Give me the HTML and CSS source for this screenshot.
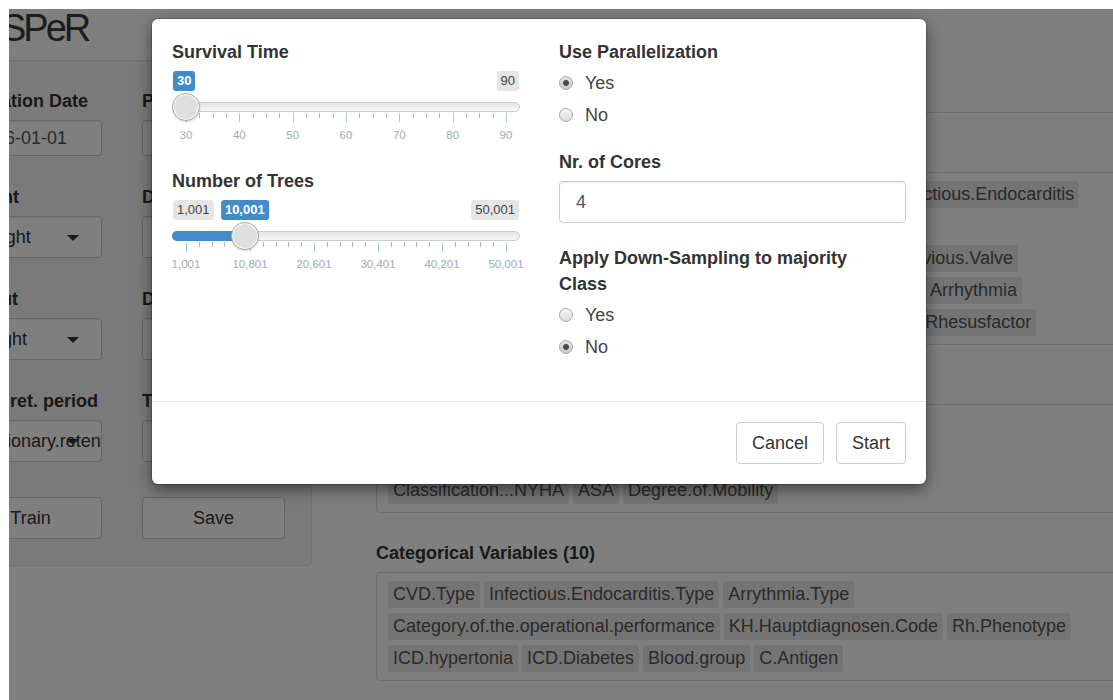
FILE: index.html
```html
<!DOCTYPE html>
<html lang="en">
<head>
<meta charset="utf-8">
<title>SPeR</title>
<link rel="stylesheet" href="styles.css">
</head>
<body>
<div class="doc-line"><p>Example of the modal dialog with the settings of the learning algorithm and the prediction type</p></div>

<div class="frame">
  <div class="app">
    <h1 class="app-title">SPeR</h1>

    <div class="layout">
      <aside class="well">
        <div class="well-grid">
          <div class="form-group">
            <label>Operation Date</label>
            <div class="form-control date">2016-01-01</div>
          </div>
          <div class="form-group">
            <label>Prediction Date</label>
            <div class="form-control date">2017-12-31</div>
          </div>

          <div class="form-group">
            <label>Patient</label>
            <div class="form-control select">Weight<span class="caret"></span></div>
          </div>
          <div class="form-group">
            <label>Data Source</label>
            <div class="form-control select">Registry<span class="caret"></span></div>
          </div>

          <div class="form-group">
            <label>Output</label>
            <div class="form-control select">Height<span class="caret"></span></div>
          </div>
          <div class="form-group">
            <label>Data Split</label>
            <div class="form-control select">Random<span class="caret"></span></div>
          </div>

          <div class="form-group">
            <label>Mean ret. period</label>
            <div class="form-control select">Stationary.retention<span class="caret"></span></div>
          </div>
          <div class="form-group">
            <label>Time Unit</label>
            <div class="form-control select">Days<span class="caret"></span></div>
          </div>

          <button class="btn btn-block" type="button">Train</button>
          <button class="btn btn-block" type="button">Save</button>
        </div>
      </aside>

      <main class="main">
        <nav class="tabs">
          <a class="tab active">Variables</a>
          <a class="tab">Results</a>
        </nav>

        <section class="var-group">
          <label>Binary Variables (24)</label>
          <div class="tag-box">
            <div class="tag-row"><span class="tag">Sex</span><span class="tag">Diabetes.mellitus</span><span class="tag">Hypertension</span><span class="tag">Heart.Failure</span><span class="tag">Stroke</span><span class="tag">Infectious.Endocarditis</span></div>
            <div class="tag-row"><span class="tag">Renal.Failure</span><span class="tag">COPD</span><span class="tag">Dialysis</span><span class="tag">Emergency</span><span class="tag">Reoperation</span></div>
            <div class="tag-row"><span class="tag">Previous.Cardiac.Surgery</span><span class="tag">Previous.CABG</span><span class="tag">Atrial.Fibrillation</span><span class="tag">Previous.Valve</span></div>
            <div class="tag-row"><span class="tag">Endocarditis</span><span class="tag">Pulmonary.Hypertension</span><span class="tag">Pacemaker</span><span class="tag">Shock</span><span class="tag">ICD</span><span class="tag">Arrhythmia</span></div>
            <div class="tag-row"><span class="tag">Chronic.Lung.Disease</span><span class="tag">Liver.Cirrhosis</span><span class="tag">Malignancy</span><span class="tag">Thrombosis</span><span class="tag">Rhesusfactor</span></div>
          </div>
        </section>

        <section class="var-group">
          <label>Numerical Variables (13)</label>
          <div class="tag-box">
            <div class="tag-row"><span class="tag">Age</span><span class="tag">BMI</span><span class="tag">EuroSCORE</span><span class="tag">LVEF</span><span class="tag">Creatinine</span><span class="tag">Hemoglobin</span></div>
            <div class="tag-row"><span class="tag">Operation.Duration</span><span class="tag">Bypass.Time</span><span class="tag">Cross.Clamp.Time</span></div>
            <div class="tag-row"><span class="tag">Classification...NYHA</span><span class="tag">ASA</span><span class="tag">Degree.of.Mobility</span></div>
          </div>
        </section>

        <section class="var-group">
          <label>Categorical Variables (10)</label>
          <div class="tag-box">
            <div class="tag-row"><span class="tag">CVD.Type</span><span class="tag">Infectious.Endocarditis.Type</span><span class="tag">Arrythmia.Type</span></div>
            <div class="tag-row"><span class="tag">Category.of.the.operational.performance</span><span class="tag">KH.Hauptdiagnosen.Code</span><span class="tag">Rh.Phenotype</span></div>
            <div class="tag-row"><span class="tag">ICD.hypertonia</span><span class="tag">ICD.Diabetes</span><span class="tag">Blood.group</span><span class="tag">C.Antigen</span></div>
          </div>
        </section>
      </main>
    </div>
  </div>

  <div class="backdrop"></div>

  <div class="modal" role="dialog">
    <div class="modal-body">
      <div class="modal-col">
        <div class="slider-group">
          <label>Survival Time</label>
          <div class="irs">
            <span class="irs-line"></span>
            <span class="irs-max">90</span>
            <span class="irs-single" style="left: 1px">30</span>
            <div class="irs-grid grid-6x4">
              <span class="irs-grid-text" style="left: 0px">30</span>
              <span class="irs-grid-text" style="left: 53.33px">40</span>
              <span class="irs-grid-text" style="left: 106.67px">50</span>
              <span class="irs-grid-text" style="left: 160px">60</span>
              <span class="irs-grid-text" style="left: 213.33px">70</span>
              <span class="irs-grid-text" style="left: 266.67px">80</span>
              <span class="irs-grid-text" style="left: 320px">90</span>
            </div>
            <span class="irs-handle" style="left: 0px"></span>
          </div>
        </div>

        <div class="slider-group">
          <label>Number of Trees</label>
          <div class="irs">
            <span class="irs-line"></span>
            <span class="irs-bar" style="width: 72.8px"></span>
            <span class="irs-min">1,001</span>
            <span class="irs-max">50,001</span>
            <span class="irs-single centered" style="left: 72.8px">10,001</span>
            <div class="irs-grid grid-5x5">
              <span class="irs-grid-text" style="left: 0px">1,001</span>
              <span class="irs-grid-text" style="left: 64px">10,801</span>
              <span class="irs-grid-text" style="left: 128px">20,601</span>
              <span class="irs-grid-text" style="left: 192px">30,401</span>
              <span class="irs-grid-text" style="left: 256px">40,201</span>
              <span class="irs-grid-text" style="left: 320px">50,001</span>
            </div>
            <span class="irs-handle" style="left: 58.8px"></span>
          </div>
        </div>
      </div>

      <div class="modal-col">
        <div class="form-group-m">
          <label>Use Parallelization</label>
          <div class="radio-list">
            <label class="radio"><input type="radio" name="parallel" checked>Yes</label>
            <label class="radio"><input type="radio" name="parallel">No</label>
          </div>
        </div>

        <div class="form-group-m">
          <label>Nr. of Cores</label>
          <input class="form-control cores" type="text" value="4">
        </div>

        <div class="form-group-m">
          <label>Apply Down-Sampling to majority Class</label>
          <div class="radio-list">
            <label class="radio"><input type="radio" name="downsample">Yes</label>
            <label class="radio"><input type="radio" name="downsample" checked>No</label>
          </div>
        </div>
      </div>
    </div>

    <div class="modal-footer">
      <button class="btn" type="button">Cancel</button>
      <button class="btn" type="button">Start</button>
    </div>
  </div>
</div>
</body>
</html>
```

FILE: styles.css
```css
* {
  box-sizing: border-box;
}

html,
body {
  margin: 0;
  background: #fff;
}

body {
  font-family: "Liberation Sans", Arial, sans-serif;
  font-size: 18px;
  color: #333;
}

label {
  display: block;
  font-weight: bold;
  line-height: 26px;
  margin-bottom: 6px;
  white-space: nowrap;
}

/* line of the surrounding document, cut at the top edge */
.doc-line {
  height: 9px;
  overflow: hidden;
}

.doc-line p {
  margin: -22px 0 0 0;
  padding-left: 4px;
  font: 21px/21px "Liberation Serif", "Times New Roman", serif;
  color: #111;
  white-space: nowrap;
}

/* application window */
.frame {
  position: relative;
  margin-left: 9px;
  height: 691px;
  overflow: hidden;
  background: #fff;
}

.app {
  width: 1260px;
  margin-left: -70px;
}

.app-title {
  margin: 0 0 0 62px;
  padding-bottom: 13px;
  font-size: 38px;
  line-height: 38px;
  font-weight: normal;
  letter-spacing: -3px;
  color: #3a3a3a;
}

.layout {
  display: flex;
  align-items: flex-start;
}

/* sidebar */
.well {
  flex: none;
  width: 373px;
  padding: 27px 26px 26px 19px;
  background: #f5f5f5;
  border: 1px solid #e3e3e3;
  border-radius: 4px;
  box-shadow: inset 0 1px 1px rgba(0, 0, 0, 0.05);
}

.well-grid {
  display: grid;
  grid-template-columns: 143px 143px;
  column-gap: 40px;
}

.form-group {
  margin-bottom: 28px;
}

.form-control {
  display: block;
  width: 100%;
  height: 42px;
  padding: 0 15px;
  border: 1px solid #ccc;
  border-radius: 4px;
  background: #fff;
  font: 18px "Liberation Sans", Arial, sans-serif;
  line-height: 40px;
  color: #555;
  white-space: nowrap;
  overflow: hidden;
  box-shadow: inset 0 1px 1px rgba(0, 0, 0, 0.075);
}

.form-control.date {
  height: 36px;
  line-height: 34px;
}

.form-control.select {
  position: relative;
  color: #333;
}

.caret {
  position: absolute;
  right: 22px;
  top: 18px;
  width: 0;
  height: 0;
  border-left: 6px solid transparent;
  border-right: 6px solid transparent;
  border-top: 6px solid #333;
}

.btn {
  height: 42px;
  padding: 0 15px;
  border: 1px solid #ccc;
  border-radius: 4px;
  background: #fff;
  font: 18px "Liberation Sans", Arial, sans-serif;
  color: #333;
}

.btn-block {
  width: 100%;
  margin-top: 7px;
}

/* main panel */
.main {
  flex: 1;
  margin-left: 38px;
  padding: 11px 60px 0 26px;
}

.tabs {
  display: flex;
  height: 42px;
  border-bottom: 1px solid #ddd;
}

.tab {
  padding: 0 16px;
  line-height: 41px;
  color: #337ab7;
}

.tab.active {
  color: #555;
  background: #fff;
  border: 1px solid #ddd;
  border-bottom-color: transparent;
  border-radius: 4px 4px 0 0;
}

.var-group {
  margin-bottom: 27px;
}

.tabs + .var-group {
  margin-top: 27px;
}

.tag-box {
  display: flex;
  flex-direction: column;
  gap: 5px;
  padding: 8px 11px;
  border: 1px solid #ddd;
  border-radius: 4px;
  background: #fff;
}

.tag-row {
  display: flex;
  gap: 4px;
}

.tag {
  height: 27px;
  padding: 0 5px;
  line-height: 27px;
  background: #e8e8e8;
  border-radius: 3px;
  color: #555;
  white-space: nowrap;
}

/* modal */
.backdrop {
  position: absolute;
  inset: 0;
  background: rgba(0, 0, 0, 0.5);
}

.modal {
  position: absolute;
  left: 143px;
  top: 10px;
  width: 774px;
  background: #fff;
  border-radius: 6px;
  box-shadow: 0 0 0 1px rgba(0, 0, 0, 0.15), 0 5px 15px rgba(0, 0, 0, 0.5);
}

.modal-body {
  display: grid;
  grid-template-columns: 348px 347px;
  column-gap: 39px;
  min-height: 381px;
  padding: 20px;
}

.slider-group {
  margin-bottom: 25px;
}

.irs {
  position: relative;
  height: 72px;
}

.irs-line,
.irs-bar {
  position: absolute;
  top: 31px;
  height: 10px;
  border-radius: 8px;
}

.irs-line {
  left: 0;
  right: 0;
  border: 1px solid #ccc;
  background: linear-gradient(to bottom, #ddd -50%, #fff 150%);
}

.irs-bar {
  left: 0;
  background: #428bca;
  border-radius: 8px 0 0 8px;
}

.irs-min,
.irs-max,
.irs-single {
  position: absolute;
  top: 0;
  height: 20px;
  padding: 0 4px;
  border-radius: 3px;
  font-size: 13px;
  line-height: 20px;
}

.irs-min {
  left: 1px;
  background: rgba(0, 0, 0, 0.1);
  color: #444;
}

.irs-max {
  right: 1px;
  background: rgba(0, 0, 0, 0.1);
  color: #444;
}

.irs-single {
  background: #428bca;
  color: #fff;
  font-weight: bold;
}

.irs-single.centered {
  transform: translateX(-50%);
}

.irs-handle {
  position: absolute;
  top: 22px;
  width: 28px;
  height: 28px;
  border: 1px solid #ababab;
  border-radius: 50%;
  background: #dedede;
  box-shadow: inset 0 0 1px 1px #fff, 0 1px 2px rgba(0, 0, 0, 0.15);
}

.irs-grid {
  position: absolute;
  top: 42px;
  left: 14px;
  width: 321px;
  height: 30px;
  background-repeat: no-repeat;
}

.grid-6x4 {
  background-image:
    repeating-linear-gradient(90deg, #a6c5e4 0, #a6c5e4 1px, transparent 1px, transparent 53.333px),
    repeating-linear-gradient(90deg, #b4b4b4 0, #b4b4b4 1px, transparent 1px, transparent 13.333px);
  background-size: 100% 9px, 100% 5px;
}

.grid-5x5 {
  background-image:
    repeating-linear-gradient(90deg, #a6c5e4 0, #a6c5e4 1px, transparent 1px, transparent 64px),
    repeating-linear-gradient(90deg, #b4b4b4 0, #b4b4b4 1px, transparent 1px, transparent 12.8px);
  background-size: 100% 9px, 100% 5px;
}

.irs-grid-text {
  position: absolute;
  top: 15px;
  transform: translateX(-50%);
  font-size: 11.5px;
  line-height: 14px;
  color: #a3a9b0;
  white-space: nowrap;
}

.form-group-m {
  margin-bottom: 22px;
}

.form-group-m label {
  white-space: normal;
  width: 310px;
}

.radio-list {
  display: flex;
  flex-direction: column;
  gap: 8px;
}

.form-group-m .radio {
  display: flex;
  align-items: center;
  width: auto;
  height: 24px;
  margin: 0;
  font-weight: normal;
  line-height: 24px;
  color: #444;
}

.radio input {
  -webkit-appearance: none;
  appearance: none;
  width: 14px;
  height: 14px;
  margin: 0 12px 0 0;
  border: 1px solid #a9a9a9;
  border-radius: 50%;
  background: linear-gradient(#f6f6f6, #dadada);
}

.radio input:checked {
  background:
    radial-gradient(circle, #4a4a4a 0, #4a4a4a 2.5px, transparent 3.5px),
    linear-gradient(#e6e6e6, #c9c9c9);
}

.form-control.cores {
  height: 42px;
  padding: 0 16px;
  color: #555;
}

.modal-footer {
  display: flex;
  justify-content: flex-end;
  gap: 12px;
  padding: 20px;
  border-top: 1px solid #e5e5e5;
}
```
